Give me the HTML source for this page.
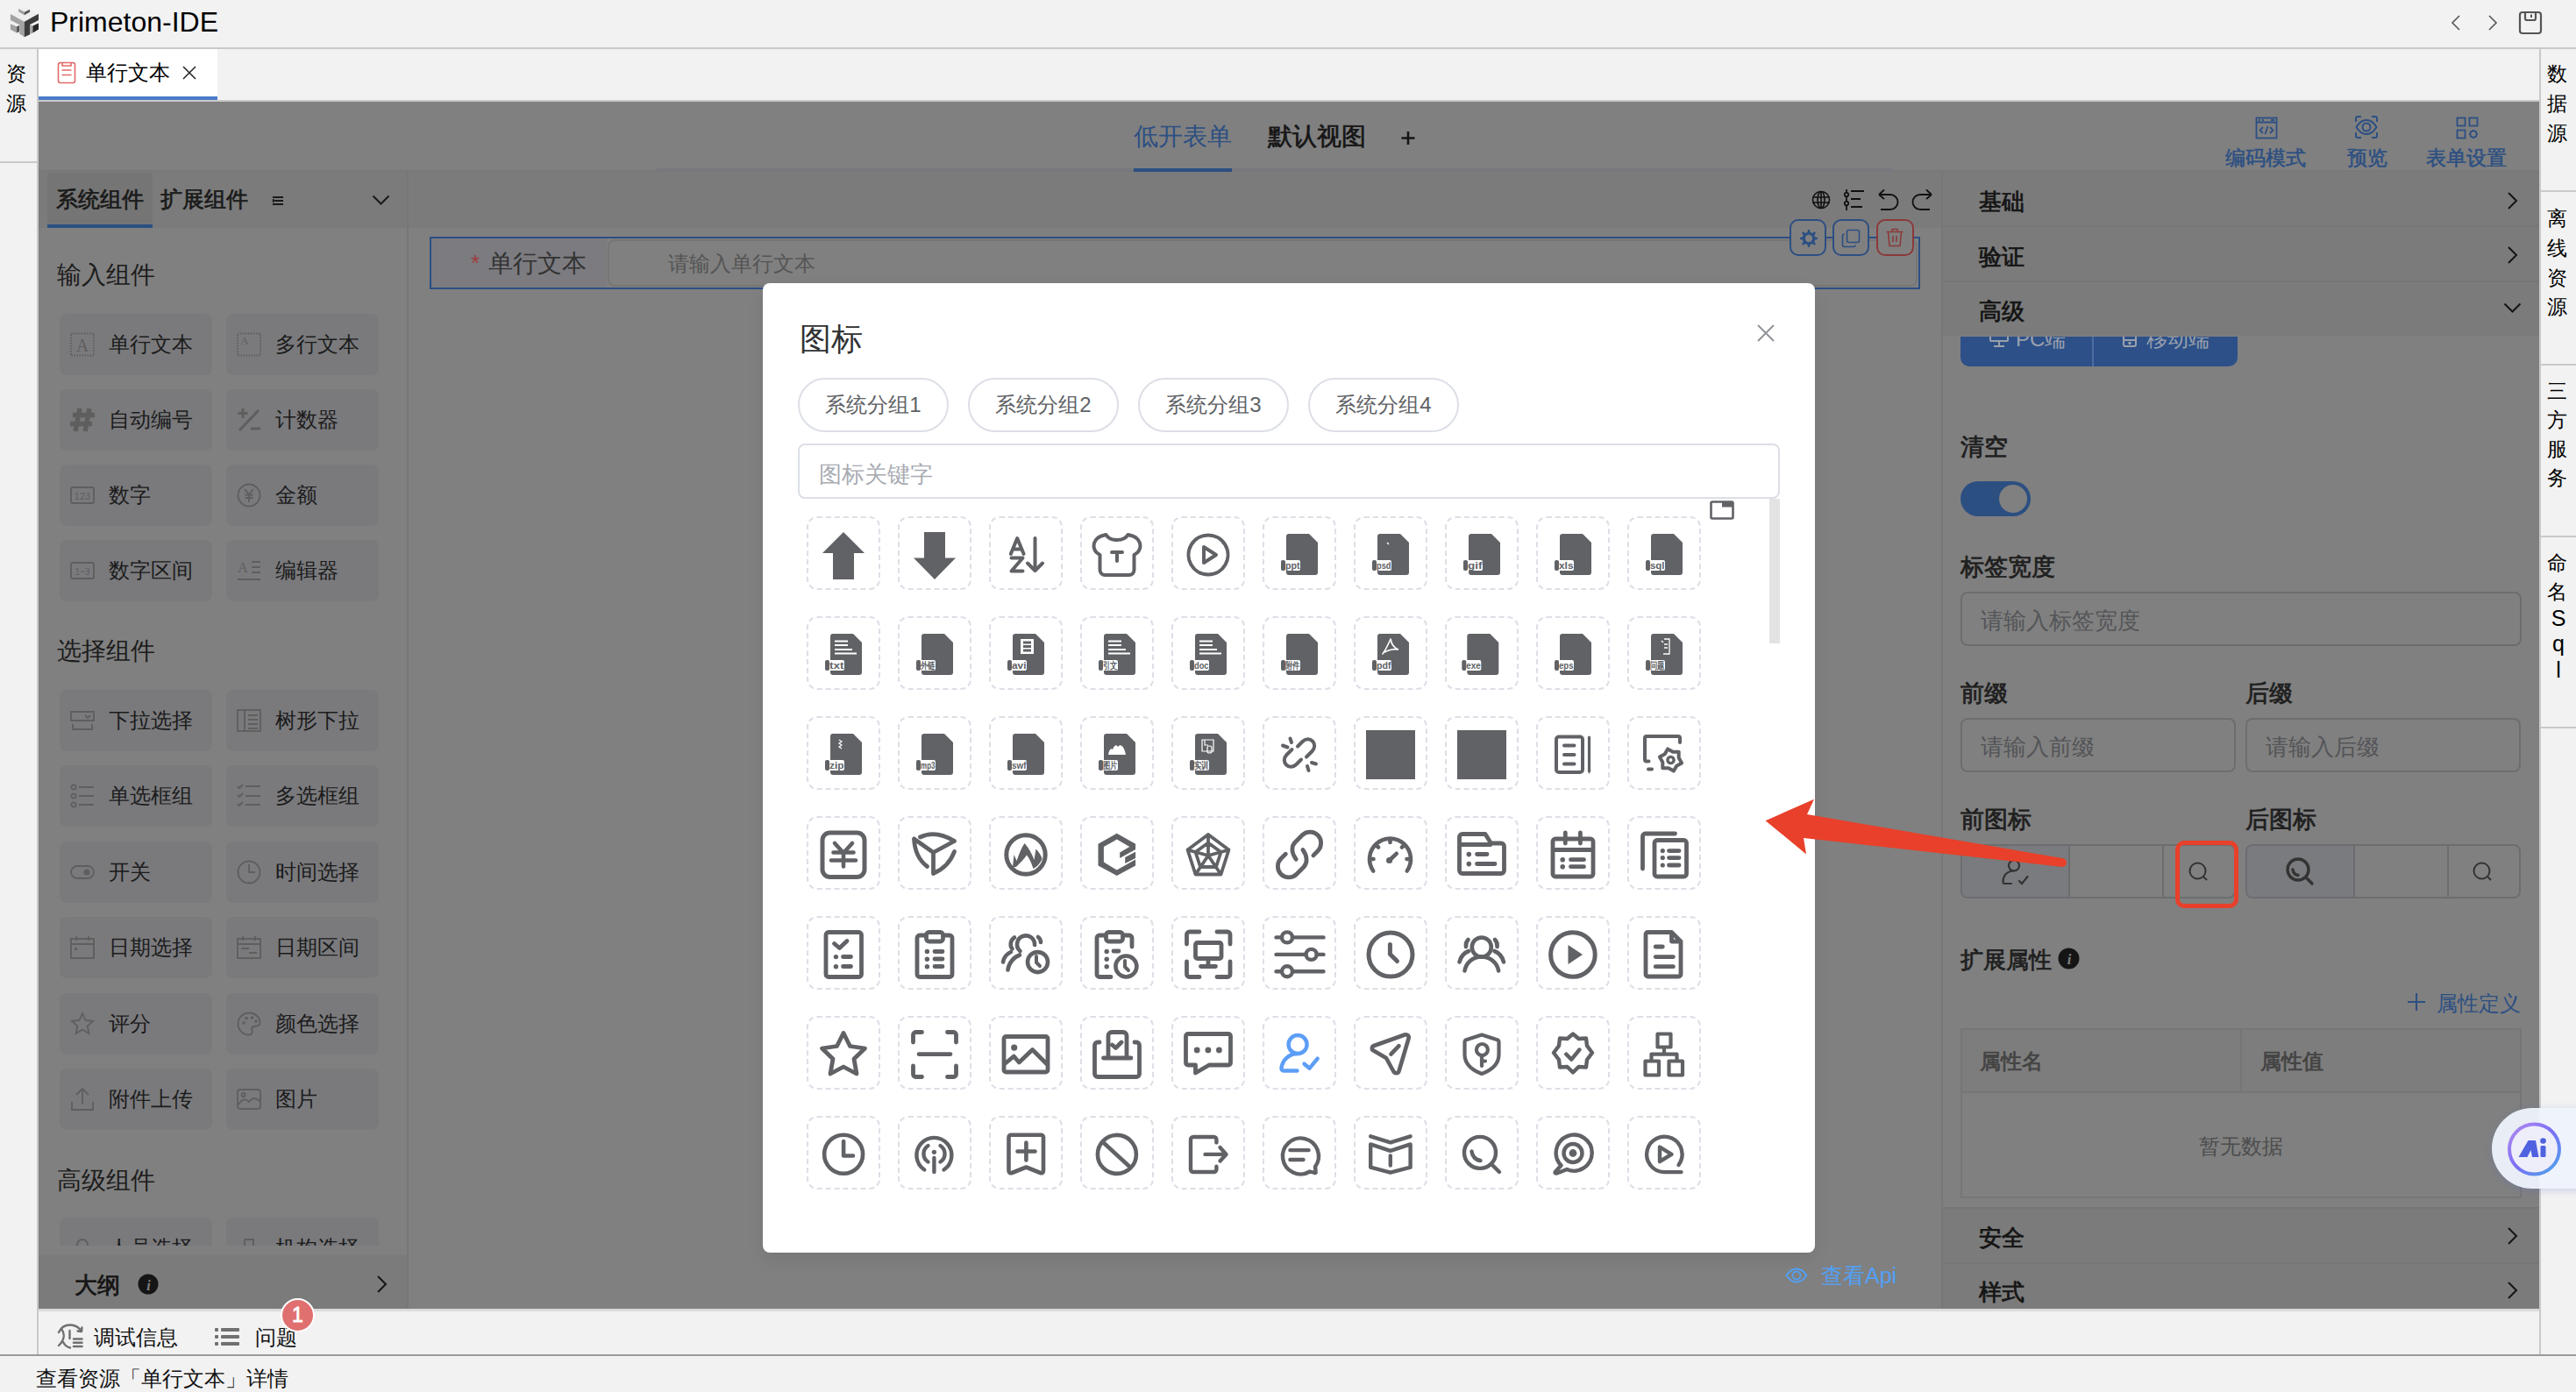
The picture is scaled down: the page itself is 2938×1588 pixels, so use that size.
<!DOCTYPE html>
<html><head><meta charset="utf-8">
<style>
*{box-sizing:border-box;margin:0;padding:0}
html,body{width:2938px;height:1588px;overflow:hidden;background:#f2f2f2;font-family:"Liberation Sans",sans-serif;color:#000}
.a{position:absolute}
.t{position:absolute;white-space:nowrap;line-height:1}
svg{display:block}
/* frame */
#title{left:0;top:0;width:2938px;height:54px;background:#f2f2f2}
.hl{position:absolute;background:#c9c9c9}
/* main (overlay-darkened colors) */
#main{left:44px;top:116px;width:2852px;height:1377px;background:#808080;overflow:hidden}
.card{position:absolute;width:174px;height:70px;background:#7a7a7d;border-radius:8px}
.card .ic{position:absolute;left:12px;top:21px;width:28px;height:28px}
.card .tx{position:absolute;left:56px;top:23px;font-size:24px;line-height:24px;color:#1c1c1c;white-space:nowrap}
.sec{position:absolute;left:21px;font-size:28px;line-height:28px;color:#1c1c1c;white-space:nowrap}
.plab{position:absolute;font-size:27px;line-height:27px;color:#1f1f1f;-webkit-text-stroke-width:0.8px;white-space:nowrap}
.pin{position:absolute;height:62px;border:2px solid #6c6d70;border-radius:8px}
.pin span{position:absolute;left:21px;top:18px;font-size:26px;line-height:26px;color:#545558;white-space:nowrap}
/* modal */
#modal{left:870px;top:323px;width:1200px;height:1106px;background:#fff;border-radius:8px;box-shadow:0 8px 20px rgba(0,0,0,.08)}
.pill{position:absolute;top:108px;width:172px;height:62px;border:2px solid #dcdfe6;border-radius:31px;font-size:24px;line-height:58px;text-align:center;color:#606266}
.cell{position:absolute;width:84px;height:84px;border:2px dashed #dcdfe6;border-radius:12px}
.cell svg{position:absolute;left:-2px;top:-2px;width:84px;height:84px}
</style></head><body>

<!-- ===== Title bar ===== -->
<div id="title" class="a">
  <svg class="a" style="left:0;top:0" width="56" height="50" viewBox="0 0 56 50">
    <polygon points="11.9,16.1 27.8,7.5 44,15.8 27.8,24.8" fill="#eeeeee"/>
    <polygon points="21.2,10.1 27.8,13.7 27.8,17.2 21.2,13.2" fill="#9c9c9c"/>
    <polygon points="27.8,13.7 34,10.8 34,13.8 27.8,17.2" fill="#555"/>
    <polygon points="11.9,16.1 27.8,24.8 27.8,42.3 22.2,38.6 22.2,28.2 11.9,23" fill="#a2a2a2"/>
    <polygon points="27.8,24.8 44,15.8 44,23 34.3,27.9 34.3,39.2 27.8,42.3" fill="#3c3c3c"/>
    <polygon points="11.9,27.2 19.1,30.3 19.1,37.5 11.9,33.7" fill="#a0a0a0"/>
    <polygon points="19.1,30.3 22,28.9 22,36 19.1,37.5" fill="#555"/>
    <polygon points="34.3,28.2 37.4,29.6 37.4,37.5 34.3,39" fill="#a8a8a8"/>
    <polygon points="37.4,29.6 44,26.5 44,33.4 37.4,37.5" fill="#262626"/>
  </svg>
  <div class="t" style="left:57px;top:9px;font-size:32px;line-height:32px;color:#000">Primeton-IDE</div>
  <svg class="a" style="left:2794px;top:16px" width="14" height="20" viewBox="0 0 14 20"><path d="M11 2 L3 10 L11 18" fill="none" stroke="#555" stroke-width="1.6"/></svg>
  <svg class="a" style="left:2836px;top:16px" width="14" height="20" viewBox="0 0 14 20"><path d="M3 2 L11 10 L3 18" fill="none" stroke="#555" stroke-width="1.6"/></svg>
  <svg class="a" style="left:2872px;top:12px" width="28" height="28" viewBox="0 0 28 28"><rect x="2" y="2" width="24" height="24" rx="3" fill="none" stroke="#555" stroke-width="2.2"/><path d="M8 2 V9 a2 2 0 0 0 2 2 H18 a2 2 0 0 0 2 -2 V2" fill="none" stroke="#555" stroke-width="2.2"/><path d="M15 4.5 V8" stroke="#555" stroke-width="2"/></svg>
</div>
<div class="hl" style="left:0;top:54px;width:2938px;height:2px"></div>

<!-- ===== Left strip ===== -->
<div class="t" style="left:7px;top:73px;font-size:23px;color:#000">资</div>
<div class="t" style="left:7px;top:107px;font-size:23px;color:#000">源</div>
<div class="t" style="left:2905px;top:73px;font-size:23px;color:#000">数</div>
<div class="t" style="left:2905px;top:107px;font-size:23px;color:#000">据</div>
<div class="t" style="left:2905px;top:141px;font-size:23px;color:#000">源</div>
<div class="t" style="left:2905px;top:238px;font-size:23px;color:#000">离</div>
<div class="t" style="left:2905px;top:272px;font-size:23px;color:#000">线</div>
<div class="t" style="left:2905px;top:306px;font-size:23px;color:#000">资</div>
<div class="t" style="left:2905px;top:339px;font-size:23px;color:#000">源</div>
<div class="t" style="left:2905px;top:435px;font-size:23px;color:#000">三</div>
<div class="t" style="left:2905px;top:468px;font-size:23px;color:#000">方</div>
<div class="t" style="left:2905px;top:501px;font-size:23px;color:#000">服</div>
<div class="t" style="left:2905px;top:534px;font-size:23px;color:#000">务</div>
<div class="t" style="left:2905px;top:631px;font-size:23px;color:#000">命</div>
<div class="t" style="left:2905px;top:664px;font-size:23px;color:#000">名</div>
<div class="t" style="left:2907px;top:693px;font-size:25px;color:#000;width:22px;text-align:center">S</div>
<div class="t" style="left:2907px;top:722px;font-size:25px;color:#000;width:22px;text-align:center">q</div>
<div class="t" style="left:2907px;top:752px;font-size:25px;color:#000;width:22px;text-align:center">l</div>
<div class="hl" style="left:0;top:184px;width:42px;height:2px"></div>
<div class="hl" style="left:42px;top:56px;width:2px;height:1490px"></div>

<!-- ===== Right strip ===== -->
<div class="hl" style="left:2896px;top:56px;width:2px;height:1490px"></div>
<div class="hl" style="left:2898px;top:217px;width:40px;height:2px"></div>
<div class="hl" style="left:2898px;top:415px;width:40px;height:2px"></div>
<div class="hl" style="left:2898px;top:611px;width:40px;height:2px"></div>
<div class="hl" style="left:2898px;top:829px;width:40px;height:2px"></div>

<!-- ===== Tab bar ===== -->
<div class="a" style="left:44px;top:56px;width:204px;height:54px;background:#fff"></div>
<div class="a" style="left:44px;top:110px;width:204px;height:4px;background:#4a7bc8"></div>
<div class="hl" style="left:44px;top:114px;width:2852px;height:2px"></div>
<svg class="a" style="left:65px;top:70px" width="22" height="26" viewBox="0 0 22 26"><rect x="1.5" y="1.5" width="19" height="23" rx="2.5" fill="none" stroke="#e46a6a" stroke-width="1.6"/><path d="M6 1.5 V5 H16 V1.5 M5.5 10 H16.5 M5.5 15.5 H16.5" fill="none" stroke="#e46a6a" stroke-width="1.6"/></svg>
<div class="t" style="left:98px;top:71px;font-size:24px;line-height:24px">单行文本</div>
<svg class="a" style="left:207px;top:74px" width="18" height="18" viewBox="0 0 18 18"><path d="M2 2 L16 16 M16 2 L2 16" stroke="#222" stroke-width="1.5"/></svg>

<!-- ===== Main (darkened) ===== -->
<div id="main" class="a"></div>
<div class="a" style="left:44px;top:194px;width:2852px;height:2px;background:#797979"></div>
<div class="a" style="left:44px;top:196px;width:2170px;height:64px;background:#7b7b7b"></div>
<div class="t" style="left:1293px;top:142px;font-size:28px;color:#2c4f82">低开表单</div>
<div class="t" style="left:1446px;top:142px;font-size:28px;color:#161616;-webkit-text-stroke-width:0.7px">默认视图</div>
<svg class="a" style="left:1598px;top:149px" width="16" height="17" viewBox="0 0 16 17"><path d="M8 1 V16 M0.5 8.5 H15.5" stroke="#161616" stroke-width="2.6"/></svg>
<div class="a" style="left:749px;top:192px;width:1409px;height:4px;background:#76787d"></div>
<div class="a" style="left:1293px;top:192px;width:112px;height:4px;background:#2c4f82"></div>
<svg class="a" style="left:2572px;top:133px" width="26" height="26" viewBox="0 0 26 26" fill="none" stroke="#2c4f82" stroke-width="1.8"><rect x="1.5" y="1.5" width="23" height="23"/><path d="M1.5 6.5 H24.5 M4 4 H6 M8 4 H10 M18 4 H22"/><path d="M9 12 L5.5 15.5 L9 19 M17 12 L20.5 15.5 L17 19 M14.5 11 L11.5 20"/></svg>
<div class="t" style="left:2538px;top:169px;font-size:23px;color:#2c4f82;-webkit-text-stroke-width:0.5px">编码模式</div>
<svg class="a" style="left:2685px;top:131px" width="28" height="28" viewBox="0 0 28 28" fill="none" stroke="#2c4f82" stroke-width="2"><path d="M2 8 V4 a2 2 0 0 1 2 -2 H8 M20 2 H24 a2 2 0 0 1 2 2 V8 M26 20 V24 a2 2 0 0 1 -2 2 H20 M8 26 H4 a2 2 0 0 1 -2 -2 V20"/><path d="M2.5 14 C6 8 10 6 14 6 C18 6 22 8 25.5 14 C22 20 18 22 14 22 C10 22 6 20 2.5 14 Z"/><circle cx="14" cy="14" r="4.5"/></svg>
<div class="t" style="left:2677px;top:169px;font-size:23px;color:#2c4f82;-webkit-text-stroke-width:0.5px">预览</div>
<svg class="a" style="left:2801px;top:133px" width="26" height="26" viewBox="0 0 26 26" fill="none" stroke="#2c4f82" stroke-width="1.8"><rect x="1.5" y="1.5" width="9" height="9"/><rect x="15.5" y="1.5" width="9" height="9"/><rect x="1.5" y="15.5" width="9" height="9"/><circle cx="20" cy="20" r="3.6"/><path d="M20 15 V16.4 M20 23.6 V25 M15 20 H16.4 M23.6 20 H25 M16.5 16.5 L17.4 17.4 M22.6 22.6 L23.5 23.5 M23.5 16.5 L22.6 17.4 M17.4 22.6 L16.5 23.5"/></svg>
<div class="t" style="left:2767px;top:169px;font-size:23px;color:#2c4f82;-webkit-text-stroke-width:0.5px">表单设置</div>
<div class="a" style="left:464px;top:196px;width:2px;height:1297px;background:#777"></div>
<div class="a" style="left:54px;top:197px;width:120px;height:63px;background:#757575"></div>
<div class="a" style="left:54px;top:256px;width:120px;height:4px;background:#2c4f82"></div>
<div class="t" style="left:64px;top:215px;font-size:25px;color:#1a1a1a;-webkit-text-stroke-width:0.7px">系统组件</div>
<div class="t" style="left:183px;top:215px;font-size:25px;color:#1a1a1a;-webkit-text-stroke-width:0.7px">扩展组件</div>
<svg class="a" style="left:310px;top:223px" width="14" height="12" viewBox="0 0 14 12" fill="none" stroke="#1a1a1a" stroke-width="1.8"><path d="M1 2 H13 M4 6 H13 M1 10 H13 M1 4.5 L3 6 L1 7.5"/></svg>
<svg class="a" style="left:424px;top:222px" width="21" height="12" viewBox="0 0 21 12"><path d="M1.5 1.5 L10.5 10.5 L19.5 1.5" fill="none" stroke="#1a1a1a" stroke-width="2"/></svg>
<div class="a" style="left:44px;top:260px;width:420px;height:1161px;overflow:hidden">
<div class="sec" style="top:40px">输入组件</div>
<div class="card" style="left:24px;top:98px"><svg class="ic" viewBox="0 0 28 28"><rect x="1" y="1.5" width="26" height="25" fill="none" stroke="#5e5e5e" stroke-width="1.8" stroke-dasharray="1.5 1.5" stroke-width="1"/><text x="14" y="22" font-size="20" font-family="Liberation Serif,serif" text-anchor="middle" fill="#5e5e5e">A</text></svg><div class="tx">单行文本</div></div>
<div class="card" style="left:214px;top:98px"><svg class="ic" viewBox="0 0 28 28"><rect x="1" y="1.5" width="26" height="25" fill="none" stroke="#5e5e5e" stroke-width="1.8" stroke-dasharray="1.5 1.5" stroke-width="1"/><text x="9" y="14" font-size="13" font-family="Liberation Serif,serif" text-anchor="middle" fill="#5e5e5e">A</text></svg><div class="tx">多行文本</div></div>
<div class="card" style="left:24px;top:184px"><svg class="ic" viewBox="0 0 28 28"><path d="M11 1 L6 27 M22 1 L17 27 M3 8.5 H28 M0 18.5 H25" fill="none" stroke="#5e5e5e" stroke-width="5.5"/></svg><div class="tx">自动编号</div></div>
<div class="card" style="left:214px;top:184px"><svg class="ic" viewBox="0 0 28 28"><path d="M7 1 V12 M1.5 6.5 H12.5 M25 3 L3 26 M16 24 H27" fill="none" stroke="#5e5e5e" stroke-width="3"/></svg><div class="tx">计数器</div></div>
<div class="card" style="left:24px;top:270px"><svg class="ic" viewBox="0 0 28 28"><rect x="1" y="5" width="26" height="18" rx="1.5" fill="none" stroke="#5e5e5e" stroke-width="1.8"/><text x="14" y="19" font-size="11" text-anchor="middle" fill="#5e5e5e" font-family="Liberation Sans,sans-serif">123</text></svg><div class="tx">数字</div></div>
<div class="card" style="left:214px;top:270px"><svg class="ic" viewBox="0 0 28 28"><circle cx="14" cy="14" r="12.5" fill="none" stroke="#5e5e5e" stroke-width="1.8"/><path d="M9 7 L14 13 L19 7 M9.5 13.5 H18.5 M9.5 17 H18.5 M14 13 V22" fill="none" stroke="#5e5e5e" stroke-width="1.8"/></svg><div class="tx">金额</div></div>
<div class="card" style="left:24px;top:356px"><svg class="ic" viewBox="0 0 28 28"><rect x="1" y="5" width="26" height="18" rx="1.5" fill="none" stroke="#5e5e5e" stroke-width="1.8"/><text x="14" y="19" font-size="10" text-anchor="middle" fill="#5e5e5e" font-family="Liberation Sans,sans-serif">1~3</text></svg><div class="tx">数字区间</div></div>
<div class="card" style="left:214px;top:356px"><svg class="ic" viewBox="0 0 28 28"><text x="7" y="16" font-size="16" text-anchor="middle" fill="#5e5e5e" font-family="Liberation Serif,serif">A</text><path d="M17 4 H27 M17 10 H27 M17 16 H27 M1 24 H27" fill="none" stroke="#5e5e5e" stroke-width="1.8" stroke-width="2.4"/></svg><div class="tx">编辑器</div></div>
<div class="sec" style="top:469px">选择组件</div>
<div class="card" style="left:24px;top:527px"><svg class="ic" viewBox="0 0 28 28"><path d="M1 4 H27 V14 H1 Z M3 18 V24 H25 V18" fill="none" stroke="#5e5e5e" stroke-width="1.8"/><path d="M17 8 L20 11 L23 8" fill="none" stroke="#5e5e5e" stroke-width="1.8"/></svg><div class="tx">下拉选择</div></div>
<div class="card" style="left:214px;top:527px"><svg class="ic" viewBox="0 0 28 28"><rect x="1" y="2" width="26" height="24" fill="none" stroke="#5e5e5e" stroke-width="1.8"/><path d="M9 2 V26 M13 8 H24 M13 13 H24 M13 18 H24 M13 23 H24" fill="none" stroke="#5e5e5e" stroke-width="1.8"/></svg><div class="tx">树形下拉</div></div>
<div class="card" style="left:24px;top:613px"><svg class="ic" viewBox="0 0 28 28"><circle cx="4" cy="4" r="2.6" fill="none" stroke="#5e5e5e" stroke-width="1.8" stroke-width="1.2"/><circle cx="4" cy="14" r="2.6" fill="none" stroke="#5e5e5e" stroke-width="1.8" stroke-width="1.2"/><circle cx="4" cy="24" r="2.6" fill="none" stroke="#5e5e5e" stroke-width="1.8" stroke-width="1.2"/><path d="M10 4 H27 M10 14 H27 M10 24 H27" fill="none" stroke="#5e5e5e" stroke-width="1.8" stroke-width="2.2"/></svg><div class="tx">单选框组</div></div>
<div class="card" style="left:214px;top:613px"><svg class="ic" viewBox="0 0 28 28"><path d="M1 3 L3 5 L7 1 M1 13 L3 15 L7 11 M1 23 L3 25 L7 21" fill="none" stroke="#5e5e5e" stroke-width="1.8" stroke-width="1.2"/><path d="M10 3 H27 M10 14 H27 M10 24 H27" fill="none" stroke="#5e5e5e" stroke-width="1.8" stroke-width="2.2"/></svg><div class="tx">多选框组</div></div>
<div class="card" style="left:24px;top:700px"><svg class="ic" viewBox="0 0 28 28"><rect x="1" y="7" width="26" height="14" rx="7" fill="none" stroke="#5e5e5e" stroke-width="1.8"/><circle cx="19" cy="14" r="3.6" fill="#5e5e5e"/></svg><div class="tx">开关</div></div>
<div class="card" style="left:214px;top:700px"><svg class="ic" viewBox="0 0 28 28"><circle cx="14" cy="14" r="12.5" fill="none" stroke="#5e5e5e" stroke-width="1.8"/><path d="M14 5 V14 H21 M14 25 V27" fill="none" stroke="#5e5e5e" stroke-width="1.8"/></svg><div class="tx">时间选择</div></div>
<div class="card" style="left:24px;top:786px"><svg class="ic" viewBox="0 0 28 28"><rect x="1" y="4" width="26" height="22" fill="none" stroke="#5e5e5e" stroke-width="1.8"/><path d="M1 10 H27 M7 1 V6 M21 1 V6" fill="none" stroke="#5e5e5e" stroke-width="1.8"/><rect x="5" y="14" width="3" height="3" fill="#5e5e5e"/></svg><div class="tx">日期选择</div></div>
<div class="card" style="left:214px;top:786px"><svg class="ic" viewBox="0 0 28 28"><rect x="1" y="4" width="26" height="22" fill="none" stroke="#5e5e5e" stroke-width="1.8"/><path d="M1 10 H27 M7 1 V6 M21 1 V6 M5 15 H14 M14 20 H23" fill="none" stroke="#5e5e5e" stroke-width="1.8"/></svg><div class="tx">日期区间</div></div>
<div class="card" style="left:24px;top:873px"><svg class="ic" viewBox="0 0 28 28"><path d="M14 2 L17.5 10 L26 10.8 L19.6 16.5 L21.5 25 L14 20.5 L6.5 25 L8.4 16.5 L2 10.8 L10.5 10 Z" fill="none" stroke="#5e5e5e" stroke-width="1.8"/></svg><div class="tx">评分</div></div>
<div class="card" style="left:214px;top:873px"><svg class="ic" viewBox="0 0 28 28"><path d="M14 1.5 C21 1.5 26.5 6.5 26.5 12.5 C26.5 17 22 17 19.5 17 C17 17 16.5 19 17.5 21 C19 24 16.5 26.5 14 26.5 C7 26.5 1.5 21 1.5 14 C1.5 7 7 1.5 14 1.5 Z" fill="none" stroke="#5e5e5e" stroke-width="1.8"/><circle cx="8" cy="13" r="1.8" fill="#5e5e5e"/><circle cx="11" cy="7.5" r="1.8" fill="#5e5e5e"/><circle cx="17.5" cy="7" r="1.8" fill="#5e5e5e"/><circle cx="22" cy="11" r="1.8" fill="#5e5e5e"/></svg><div class="tx">颜色选择</div></div>
<div class="card" style="left:24px;top:959px"><svg class="ic" viewBox="0 0 28 28"><path d="M14 2 V20 M7 9 L14 2 L21 9 M2 17 V26 H26 V17" fill="none" stroke="#5e5e5e" stroke-width="1.8" stroke-width="2"/></svg><div class="tx">附件上传</div></div>
<div class="card" style="left:214px;top:959px"><svg class="ic" viewBox="0 0 28 28"><rect x="1" y="3" width="26" height="22" rx="3" fill="none" stroke="#5e5e5e" stroke-width="1.8"/><circle cx="7.5" cy="9" r="2" fill="none" stroke="#5e5e5e" stroke-width="1.8" stroke-width="1.4"/><path d="M2 20 C7 13 10 13 14 17 C18 12 22 12 26 16" fill="none" stroke="#5e5e5e" stroke-width="1.8"/></svg><div class="tx">图片</div></div>
<div class="sec" style="top:1073px">高级组件</div>
<div class="card" style="left:24px;top:1129px"><svg class="ic" viewBox="0 0 28 28"><circle cx="14" cy="10" r="6" fill="none" stroke="#5e5e5e" stroke-width="1.8"/><path d="M3 27 C3 20 8 17 14 17 C20 17 25 20 25 27" fill="none" stroke="#5e5e5e" stroke-width="1.8"/></svg><div class="tx">人员选择</div></div>
<div class="card" style="left:214px;top:1129px"><svg class="ic" viewBox="0 0 28 28"><rect x="9" y="4" width="10" height="9" fill="none" stroke="#5e5e5e" stroke-width="1.8"/><path d="M14 13 V19 M4 19 H24 V25 M4 19 V25" fill="none" stroke="#5e5e5e" stroke-width="1.8"/></svg><div class="tx">机构选择</div></div>
</div>
<div class="a" style="left:44px;top:1432px;width:420px;height:61px;background:#7b7b7b"></div>
<div class="t" style="left:85px;top:1453px;font-size:26px;color:#151515;-webkit-text-stroke-width:0.8px">大纲</div>
<svg class="a" style="left:157px;top:1453px" width="24" height="24" viewBox="0 0 24 24"><circle cx="12" cy="12" r="11.5" fill="#151515"/><text x="12.5" y="18.5" font-size="16" font-weight="bold" font-style="italic" text-anchor="middle" fill="#808080" font-family="Liberation Serif,serif">i</text></svg>
<svg class="a" style="left:429px;top:1454px" width="13" height="22" viewBox="0 0 13 22"><path d="M2 2 L11 11 L2 20" fill="none" stroke="#151515" stroke-width="2"/></svg>
<svg class="a" style="left:2066px;top:217px" width="22" height="22" viewBox="0 0 22 22" fill="none" stroke="#111" stroke-width="1.6"><circle cx="11" cy="11" r="9.5"/><ellipse cx="11" cy="11" rx="4" ry="9.5"/><path d="M1.5 8 H20.5 M1.5 14 H20.5 M11 1.5 V20.5"/></svg>
<svg class="a" style="left:2102px;top:215px" width="26" height="26" viewBox="0 0 26 26" fill="none" stroke="#111" stroke-width="1.8"><path d="M4 1 V25 M9 3 H24 M9 12 H20 M9 21 H22"/><circle cx="4" cy="7" r="2.2" fill="#808080"/><circle cx="4" cy="17" r="2.2" fill="#808080"/></svg>
<svg class="a" style="left:2141px;top:215px" width="26" height="26" viewBox="0 0 26 26" fill="none" stroke="#111" stroke-width="1.8"><path d="M2 7 L8 1.5 M2 7 L8 12 M2 7 H15 a8.5 8.5 0 0 1 0 17 H4"/></svg>
<svg class="a" style="left:2179px;top:215px" width="26" height="26" viewBox="0 0 26 26" fill="none" stroke="#111" stroke-width="1.8"><path d="M24 7 L18 1.5 M24 7 L18 12 M24 7 H11 a8.5 8.5 0 0 0 0 17 H22"/></svg>
<div class="a" style="left:490px;top:270px;width:1700px;height:60px;border:2px solid #2c4f82"></div>
<div class="a" style="left:492px;top:272px;width:200px;height:56px;background:#7b7b80"></div>
<div class="t" style="left:537px;top:287px;font-size:26px;color:#9e3d3d">*</div>
<div class="t" style="left:557px;top:287px;font-size:28px;color:#333">单行文本</div>
<div class="a" style="left:693px;top:273px;width:1494px;height:54px;border:2px solid #767676;border-radius:8px;background:#808080"></div>
<div class="t" style="left:762px;top:289px;font-size:24px;color:#555">请输入单行文本</div>
<div class="a" style="left:2041px;top:250px;width:42px;height:42px;border:2px solid #2c4f82;border-radius:10px;background:#808080"></div>
<svg class="a" style="left:2051px;top:261px" width="22" height="22" viewBox="0 0 22 22"><path d="M11 1 L13 1 L13.6 4 L16 5 L18.5 3.2 L20 4.8 L18.3 7.2 L19.2 9.5 L22 10 V12 L19.2 12.6 L18.3 14.9 L20 17.3 L18.5 18.8 L16 17.1 L13.6 18.1 L13 21 H11 L10.4 18.1 L8 17.1 L5.5 18.8 L4 17.3 L5.7 14.9 L4.8 12.6 L2 12 V10 L4.8 9.5 L5.7 7.2 L4 4.8 L5.5 3.2 L8 5 L10.4 4 Z" fill="#2c4f82"/><circle cx="12" cy="11" r="4.2" fill="#808080"/></svg>
<div class="a" style="left:2083px;top:270px;width:8px;height:2px;background:#2c4f82"></div>
<div class="a" style="left:2090px;top:250px;width:42px;height:42px;border:2px solid #2c4f82;border-radius:10px;background:#808080"></div>
<svg class="a" style="left:2100px;top:261px" width="22" height="22" viewBox="0 0 22 22" fill="none" stroke="#2c4f82" stroke-width="1.6"><rect x="6.5" y="1.5" width="14" height="14" rx="2"/><path d="M3.5 6 a2 2 0 0 0 -2 2 V18.5 a2 2 0 0 0 2 2 H14 a2 2 0 0 0 2 -2"/></svg>
<div class="a" style="left:2132px;top:270px;width:9px;height:2px;background:#2c4f82"></div>
<div class="a" style="left:2140px;top:250px;width:43px;height:42px;border:2px solid #8b3a3a;border-radius:10px;background:#808080"></div>
<svg class="a" style="left:2150px;top:260px" width="22" height="22" viewBox="0 0 22 22" fill="none" stroke="#8b3a3a" stroke-width="1.6"><path d="M1.5 4.5 H20.5 M8 4.5 V1.5 H14 V4.5 M3.5 4.5 L5 20.5 H17 L18.5 4.5 M9 9 V16 M13 9 V16"/></svg>
<div class="a" style="left:2214px;top:196px;width:2px;height:1297px;background:#777"></div>
<div class="a" style="left:2216px;top:196px;width:680px;height:187px;background:#7b7b7b"></div>
<div class="a" style="left:2216px;top:257px;width:680px;height:2px;background:#767676"></div>
<div class="a" style="left:2216px;top:320px;width:680px;height:2px;background:#767676"></div>
<div class="t" style="left:2257px;top:217px;font-size:26px;color:#151515;-webkit-text-stroke-width:0.8px">基础</div>
<div class="t" style="left:2257px;top:280px;font-size:26px;color:#151515;-webkit-text-stroke-width:0.8px">验证</div>
<div class="t" style="left:2257px;top:342px;font-size:26px;color:#151515;-webkit-text-stroke-width:0.8px">高级</div>
<svg class="a" style="left:2859px;top:218px" width="13" height="22" viewBox="0 0 13 22"><path d="M2 2 L11 11 L2 20" fill="none" stroke="#151515" stroke-width="2"/></svg>
<svg class="a" style="left:2859px;top:280px" width="13" height="22" viewBox="0 0 13 22"><path d="M2 2 L11 11 L2 20" fill="none" stroke="#151515" stroke-width="2"/></svg>
<svg class="a" style="left:2855px;top:345px" width="21" height="13" viewBox="0 0 21 13"><path d="M1.5 1.5 L10.5 10.5 L19.5 1.5" fill="none" stroke="#151515" stroke-width="2"/></svg>
<div class="a" style="left:2236px;top:384px;width:316px;height:34px;overflow:hidden"><div class="a" style="left:0;top:-28px;width:316px;height:62px;background:#2d5089;border-radius:0 0 10px 10px"></div><div class="a" style="left:150px;top:0;width:2px;height:35px;background:#4e6d9e"></div><svg class="a" style="left:32px;top:-9px" width="24" height="22" viewBox="0 0 24 22" fill="none" stroke="#9aa0ab" stroke-width="2"><rect x="2" y="1" width="20" height="13" rx="1"/><path d="M12 14 V19 M6 20 H18"/></svg><div class="t" style="left:63px;top:-9px;font-size:24px;color:#9aa0ab">PC端</div><svg class="a" style="left:184px;top:-9px" width="18" height="22" viewBox="0 0 18 22" fill="none" stroke="#9aa0ab" stroke-width="2"><rect x="2" y="1" width="14" height="19" rx="2"/><path d="M2 13 H16"/><circle cx="9" cy="16.5" r="0.8" fill="#9aa0ab"/></svg><div class="t" style="left:212px;top:-9px;font-size:24px;color:#9aa0ab">移动端</div></div>
<div class="plab" style="left:2236px;top:497px">清空</div>
<div class="a" style="left:2236px;top:549px;width:80px;height:40px;border-radius:20px;background:#2c4f82"></div>
<div class="a" style="left:2280px;top:553px;width:32px;height:32px;border-radius:16px;background:#808080"></div>
<div class="plab" style="left:2236px;top:634px">标签宽度</div>
<div class="pin" style="left:2236px;top:675px;width:640px"><span>请输入标签宽度</span></div>
<div class="plab" style="left:2236px;top:778px">前缀</div>
<div class="plab" style="left:2561px;top:778px">后缀</div>
<div class="pin" style="left:2236px;top:819px;width:314px"><span>请输入前缀</span></div>
<div class="pin" style="left:2561px;top:819px;width:314px"><span>请输入后缀</span></div>
<div class="plab" style="left:2236px;top:922px">前图标</div>
<div class="plab" style="left:2561px;top:922px">后图标</div>
<div class="pin" style="left:2236px;top:963px;width:314px;overflow:hidden"><div class="a" style="left:0;top:0;width:121px;height:58px;background:#7a7b7e"></div><div class="a" style="left:121px;top:0;width:2px;height:58px;background:#6c6d70"></div><div class="a" style="left:228px;top:0;width:2px;height:58px;background:#6c6d70"></div></div>
<div class="pin" style="left:2561px;top:963px;width:314px;overflow:hidden"><div class="a" style="left:0;top:0;width:121px;height:58px;background:#7a7b7e"></div><div class="a" style="left:121px;top:0;width:2px;height:58px;background:#6c6d70"></div><div class="a" style="left:228px;top:0;width:2px;height:58px;background:#6c6d70"></div></div>
<svg class="a" style="left:2281px;top:980px" width="34" height="30" viewBox="0 0 34 30" fill="none" stroke="#333" stroke-width="2.2" stroke-linecap="round"><circle cx="16" cy="7.5" r="6"/><path d="M16 13.5 C9 13.5 3.5 18 3.5 26 C3.5 27 4 28 5.5 28 H13 M22 25 L25 28 L31.5 20"/></svg>
<svg class="a" style="left:2496px;top:983px" width="24" height="24" viewBox="0 0 24 24" fill="none" stroke="#333" stroke-width="2"><circle cx="10.5" cy="10.5" r="9"/><path d="M17 17 L21 21"/></svg>
<svg class="a" style="left:2606px;top:977px" width="34" height="34" viewBox="0 0 34 34" fill="none" stroke="#333" stroke-width="3.4" stroke-linecap="round"><circle cx="15" cy="15" r="12"/><path d="M24 24 L31 31 M9 15 C9.5 19 11.5 21 15 21.5"/></svg>
<svg class="a" style="left:2820px;top:983px" width="24" height="24" viewBox="0 0 24 24" fill="none" stroke="#333" stroke-width="2"><circle cx="10.5" cy="10.5" r="9"/><path d="M17 17 L21 21"/></svg>
<div class="plab" style="left:2236px;top:1082px;font-size:26px">扩展属性</div>
<svg class="a" style="left:2347px;top:1081px" width="25" height="25" viewBox="0 0 24 24"><circle cx="12" cy="12" r="11.5" fill="#151515"/><text x="12.5" y="18.5" font-size="16" font-weight="bold" font-style="italic" text-anchor="middle" fill="#808080" font-family="Liberation Serif,serif">i</text></svg>
<svg class="a" style="left:2745px;top:1132px" width="22" height="22" viewBox="0 0 22 22"><path d="M11 1 V21 M1 11 H21" stroke="#2c4f82" stroke-width="2"/></svg>
<div class="t" style="left:2779px;top:1133px;font-size:24px;color:#2c4f82">属性定义</div>
<div class="a" style="left:2236px;top:1173px;width:640px;height:194px;border:2px solid #767676"></div>
<div class="a" style="left:2238px;top:1175px;width:636px;height:70px;background:#7d7d7d"></div>
<div class="a" style="left:2238px;top:1245px;width:636px;height:2px;background:#767676"></div>
<div class="a" style="left:2555px;top:1175px;width:2px;height:70px;background:#767676"></div>
<div class="t" style="left:2258px;top:1199px;font-size:24px;color:#444;-webkit-text-stroke-width:0.8px">属性名</div>
<div class="t" style="left:2578px;top:1199px;font-size:24px;color:#444;-webkit-text-stroke-width:0.8px">属性值</div>
<div class="t" style="left:2508px;top:1296px;font-size:24px;color:#4d4d4d">暂无数据</div>
<div class="a" style="left:2216px;top:1377px;width:680px;height:116px;background:#7b7b7b"></div>
<div class="a" style="left:2216px;top:1377px;width:680px;height:2px;background:#767676"></div>
<div class="a" style="left:2216px;top:1440px;width:680px;height:2px;background:#767676"></div>
<div class="t" style="left:2257px;top:1399px;font-size:26px;color:#151515;-webkit-text-stroke-width:0.8px">安全</div>
<div class="t" style="left:2257px;top:1461px;font-size:26px;color:#151515;-webkit-text-stroke-width:0.8px">样式</div>
<svg class="a" style="left:2859px;top:1399px" width="13" height="22" viewBox="0 0 13 22"><path d="M2 2 L11 11 L2 20" fill="none" stroke="#151515" stroke-width="2"/></svg>
<svg class="a" style="left:2859px;top:1461px" width="13" height="22" viewBox="0 0 13 22"><path d="M2 2 L11 11 L2 20" fill="none" stroke="#151515" stroke-width="2"/></svg>

<!-- ===== Bottom panel ===== -->
<div class="a" style="left:44px;top:1493px;width:2852px;height:3px;background:#dadada"></div>
<svg class="a" style="left:60px;top:1505px" width="40" height="38" viewBox="60 1505 40 38" fill="none" stroke="#707070" stroke-width="2.4" stroke-linecap="round"><path d="M67 1520 C70 1513 75 1511.5 80 1511.5 C85 1511.5 90 1514 93 1519 M93 1519 L93.5 1514.5 M93 1519 L88.5 1518.5 M70 1516 C74 1521 74 1528 67 1535 M72 1531 C74 1535 77 1537 80 1537.5 M79.5 1518 V1527"/><path d="M84 1527.5 H93.5 M84 1531.8 H93.5 M84 1536 H93.5" stroke-width="2.6"/></svg>
<div class="t" style="left:107px;top:1514px;font-size:24px;color:#111">调试信息</div>
<svg class="a" style="left:245px;top:1514px" width="28" height="22" viewBox="0 0 28 22" fill="#707070"><rect x="0" y="1" width="4" height="4" rx="1"/><rect x="0" y="9" width="4" height="4" rx="1"/><rect x="0" y="17" width="4" height="4" rx="1"/><rect x="7" y="1" width="21" height="4" rx="1"/><rect x="7" y="9" width="21" height="4" rx="1"/><rect x="7" y="17" width="21" height="4" rx="1"/></svg>
<div class="t" style="left:291px;top:1514px;font-size:24px;color:#111">问题</div>
<div class="a" style="left:320px;top:1481px;width:39px;height:39px;border-radius:20px;background:#e07070;border:2px solid #fff"></div>
<div class="t" style="left:333px;top:1489px;font-size:23px;color:#fff;-webkit-text-stroke-width:0.8px">1</div>

<!-- ===== Status bar ===== -->
<div class="a" style="left:0;top:1545px;width:2938px;height:2px;background:#9a9a9a"></div>
<div class="t" style="left:41px;top:1561px;font-size:24px;line-height:24px;color:#111">查看资源「单行文本」详情</div>

<!-- ===== Modal ===== -->
<div id="modal" class="a">
<div class="t" style="left:42px;top:46px;font-size:36px;color:#303133">图标</div>
<svg class="a" style="left:1133px;top:46px" width="22" height="22" viewBox="0 0 22 22"><path d="M2 2 L20 20 M20 2 L2 20" stroke="#909399" stroke-width="2"/></svg>
<div class="pill" style="left:40px">系统分组1</div>
<div class="pill" style="left:234px">系统分组2</div>
<div class="pill" style="left:428px">系统分组3</div>
<div class="pill" style="left:622px">系统分组4</div>
<div class="a" style="left:40px;top:183px;width:1120px;height:63px;border:2px solid #dcdfe6;border-radius:8px"></div>
<div class="t" style="left:64px;top:205px;font-size:26px;color:#a8abb2">图标关键字</div>
<div class="a" style="left:1148px;top:246px;width:12px;height:165px;background:#e3e3e3"></div>
<svg class="a" style="left:1080px;top:248px" width="28" height="22" viewBox="0 0 28 22"><rect x="1.5" y="1.5" width="25" height="19" rx="1.5" fill="none" stroke="#606266" stroke-width="2.6"/><rect x="14" y="1.5" width="12.5" height="6" fill="#606266"/></svg>
<div class="cell" style="left:50px;top:266px"><svg viewBox="0 0 84 84"><path d="M42 18 L66 42 H54 V72 H30 V42 H18 Z" fill="#606266"/></svg></div>
<div class="cell" style="left:154px;top:266px"><svg viewBox="0 0 84 84"><path d="M30 18 H54 V47.5 H66 L42 72 L18 47.5 H30 Z" fill="#606266"/></svg></div>
<div class="cell" style="left:258px;top:266px"><svg viewBox="0 0 84 84"><path d="M24.8 43 L32.2 25 L39.6 43 M27.5 37.5 H37 M25.5 47.5 H38.5 L25.5 62.5 H38.5 M52.5 25 V62 M44 53.5 L52.5 62 L61 53.5" fill="none" stroke="#606266" stroke-width="4" stroke-linecap="round" stroke-linejoin="round"/></svg></div>
<div class="cell" style="left:362px;top:266px"><svg viewBox="0 0 84 84"><path d="M29.5 21 C31.5 24.5 36 27 42 27 C48 27 52.5 24.5 54.5 21 L60 22.5 C65 24 68.5 29 68.5 34 C68.5 38 66 41.5 61.5 44 V61 C61.5 64.5 59 67 55.5 67 H28.5 C25 67 22.5 64.5 22.5 61 V44 C18 41.5 15.5 38 15.5 34 C15.5 29 19 24 24 22.5 Z M36 41 H48 M42 41 V51" fill="none" stroke="#606266" stroke-width="4" stroke-linecap="round" stroke-linejoin="round"/></svg></div>
<div class="cell" style="left:466px;top:266px"><svg viewBox="0 0 84 84"><path d="M42 21.5 a22.5 22.5 0 1 0 0.01 0 Z M37 35 L51 44 L37 53 Z" fill="none" stroke="#606266" stroke-width="4" stroke-linecap="round" stroke-linejoin="round"/></svg></div>
<div class="cell" style="left:570px;top:266px"><svg viewBox="0 0 84 84"><g transform="translate(0,0)"><path d="M30 20 H53 L63 30 V64 a3 3 0 0 1 -3 3 H30 a3 3 0 0 1 -3 -3 V23 a3 3 0 0 1 3 -3 Z" fill="#606266"/><rect x="21" y="50" width="22" height="12" rx="2" fill="#fff"/><rect x="21" y="50" width="5" height="12" rx="2" fill="#606266"/><text x="26" y="60" font-size="11" font-weight="bold" fill="#606266" font-family="Liberation Sans, sans-serif" textLength="16.5" lengthAdjust="spacingAndGlyphs">ppt</text></g></svg></div>
<div class="cell" style="left:674px;top:266px"><svg viewBox="0 0 84 84"><g transform="translate(0,0)"><path d="M30 20 H53 L63 30 V64 a3 3 0 0 1 -3 3 H30 a3 3 0 0 1 -3 -3 V23 a3 3 0 0 1 3 -3 Z" fill="#606266"/><path d="M38 30 L40 32" stroke="#fff" stroke-width="1.2"/><rect x="21" y="50" width="22" height="12" rx="2" fill="#fff"/><rect x="21" y="50" width="5" height="12" rx="2" fill="#606266"/><text x="26" y="60" font-size="11" font-weight="bold" fill="#606266" font-family="Liberation Sans, sans-serif" textLength="16.5" lengthAdjust="spacingAndGlyphs">psd</text></g></svg></div>
<div class="cell" style="left:778px;top:266px"><svg viewBox="0 0 84 84"><g transform="translate(0,0)"><path d="M30 20 H53 L63 30 V64 a3 3 0 0 1 -3 3 H30 a3 3 0 0 1 -3 -3 V23 a3 3 0 0 1 3 -3 Z" fill="#606266"/><rect x="21" y="50" width="22" height="12" rx="2" fill="#fff"/><rect x="21" y="50" width="5" height="12" rx="2" fill="#606266"/><text x="26" y="60" font-size="11" font-weight="bold" fill="#606266" font-family="Liberation Sans, sans-serif" textLength="16.5" lengthAdjust="spacingAndGlyphs">gif</text></g></svg></div>
<div class="cell" style="left:882px;top:266px"><svg viewBox="0 0 84 84"><g transform="translate(0,0)"><path d="M30 20 H53 L63 30 V64 a3 3 0 0 1 -3 3 H30 a3 3 0 0 1 -3 -3 V23 a3 3 0 0 1 3 -3 Z" fill="#606266"/><rect x="21" y="50" width="22" height="12" rx="2" fill="#fff"/><rect x="21" y="50" width="5" height="12" rx="2" fill="#606266"/><text x="26" y="60" font-size="11" font-weight="bold" fill="#606266" font-family="Liberation Sans, sans-serif" textLength="16.5" lengthAdjust="spacingAndGlyphs">xls</text></g></svg></div>
<div class="cell" style="left:986px;top:266px"><svg viewBox="0 0 84 84"><g transform="translate(0,0)"><path d="M30 20 H53 L63 30 V64 a3 3 0 0 1 -3 3 H30 a3 3 0 0 1 -3 -3 V23 a3 3 0 0 1 3 -3 Z" fill="#606266"/><rect x="21" y="50" width="22" height="12" rx="2" fill="#fff"/><rect x="21" y="50" width="5" height="12" rx="2" fill="#606266"/><text x="26" y="60" font-size="11" font-weight="bold" fill="#606266" font-family="Liberation Sans, sans-serif" textLength="16.5" lengthAdjust="spacingAndGlyphs">sql</text></g></svg></div>
<div class="cell" style="left:50px;top:380px"><svg viewBox="0 0 84 84"><g transform="translate(0,0)"><path d="M30 20 H53 L63 30 V64 a3 3 0 0 1 -3 3 H30 a3 3 0 0 1 -3 -3 V23 a3 3 0 0 1 3 -3 Z" fill="#606266"/><g fill="#fff"><rect x="32" y="27.5" width="15" height="2"/><rect x="32" y="32" width="15" height="2"/><rect x="32" y="37" width="20" height="2"/><rect x="32" y="41.5" width="25" height="2"/></g><rect x="21" y="50" width="22" height="12" rx="2" fill="#fff"/><rect x="21" y="50" width="5" height="12" rx="2" fill="#606266"/><text x="26" y="60" font-size="11" font-weight="bold" fill="#606266" font-family="Liberation Sans, sans-serif" textLength="16.5" lengthAdjust="spacingAndGlyphs">txt</text></g></svg></div>
<div class="cell" style="left:154px;top:380px"><svg viewBox="0 0 84 84"><g transform="translate(0,0)"><path d="M30 20 H53 L63 30 V64 a3 3 0 0 1 -3 3 H30 a3 3 0 0 1 -3 -3 V23 a3 3 0 0 1 3 -3 Z" fill="#606266"/><rect x="21" y="50" width="22" height="12" rx="2" fill="#fff"/><rect x="21" y="50" width="5" height="12" rx="2" fill="#606266"/><text x="26" y="60" font-size="11" font-weight="bold" fill="#606266" font-family="Liberation Sans, sans-serif" textLength="16.5" lengthAdjust="spacingAndGlyphs">外链</text></g></svg></div>
<div class="cell" style="left:258px;top:380px"><svg viewBox="0 0 84 84"><g transform="translate(0,0)"><path d="M30 20 H53 L63 30 V64 a3 3 0 0 1 -3 3 H30 a3 3 0 0 1 -3 -3 V23 a3 3 0 0 1 3 -3 Z" fill="#606266"/><g fill="#fff"><rect x="36" y="26" width="15" height="17"/></g><g fill="#606266"><rect x="39" y="28.5" width="9" height="3"/><rect x="39" y="33" width="9" height="3"/><rect x="39" y="37.5" width="9" height="3"/></g><rect x="21" y="50" width="22" height="12" rx="2" fill="#fff"/><rect x="21" y="50" width="5" height="12" rx="2" fill="#606266"/><text x="26" y="60" font-size="11" font-weight="bold" fill="#606266" font-family="Liberation Sans, sans-serif" textLength="16.5" lengthAdjust="spacingAndGlyphs">avi</text></g></svg></div>
<div class="cell" style="left:362px;top:380px"><svg viewBox="0 0 84 84"><g transform="translate(0,0)"><path d="M30 20 H53 L63 30 V64 a3 3 0 0 1 -3 3 H30 a3 3 0 0 1 -3 -3 V23 a3 3 0 0 1 3 -3 Z" fill="#606266"/><g fill="#fff"><rect x="32" y="27.5" width="15" height="2"/><rect x="32" y="32" width="15" height="2"/><rect x="32" y="37" width="20" height="2"/><rect x="32" y="41.5" width="25" height="2"/></g><rect x="21" y="50" width="22" height="12" rx="2" fill="#fff"/><rect x="21" y="50" width="5" height="12" rx="2" fill="#606266"/><text x="26" y="60" font-size="11" font-weight="bold" fill="#606266" font-family="Liberation Sans, sans-serif" textLength="16.5" lengthAdjust="spacingAndGlyphs">引文</text></g></svg></div>
<div class="cell" style="left:466px;top:380px"><svg viewBox="0 0 84 84"><g transform="translate(0,0)"><path d="M30 20 H53 L63 30 V64 a3 3 0 0 1 -3 3 H30 a3 3 0 0 1 -3 -3 V23 a3 3 0 0 1 3 -3 Z" fill="#606266"/><g fill="#fff"><rect x="32" y="27.5" width="15" height="2"/><rect x="32" y="32" width="15" height="2"/><rect x="32" y="37" width="20" height="2"/><rect x="32" y="41.5" width="25" height="2"/></g><rect x="21" y="50" width="22" height="12" rx="2" fill="#fff"/><rect x="21" y="50" width="5" height="12" rx="2" fill="#606266"/><text x="26" y="60" font-size="11" font-weight="bold" fill="#606266" font-family="Liberation Sans, sans-serif" textLength="16.5" lengthAdjust="spacingAndGlyphs">doc</text></g></svg></div>
<div class="cell" style="left:570px;top:380px"><svg viewBox="0 0 84 84"><g transform="translate(0,0)"><path d="M30 20 H53 L63 30 V64 a3 3 0 0 1 -3 3 H30 a3 3 0 0 1 -3 -3 V23 a3 3 0 0 1 3 -3 Z" fill="#606266"/><rect x="21" y="50" width="22" height="12" rx="2" fill="#fff"/><rect x="21" y="50" width="5" height="12" rx="2" fill="#606266"/><text x="26" y="60" font-size="11" font-weight="bold" fill="#606266" font-family="Liberation Sans, sans-serif" textLength="16.5" lengthAdjust="spacingAndGlyphs">附件</text></g></svg></div>
<div class="cell" style="left:674px;top:380px"><svg viewBox="0 0 84 84"><g transform="translate(0,0)"><path d="M30 20 H53 L63 30 V64 a3 3 0 0 1 -3 3 H30 a3 3 0 0 1 -3 -3 V23 a3 3 0 0 1 3 -3 Z" fill="#606266"/><path d="M42 26 C40 30 38 36 33 43 M42 26 C43 32 45 36 51 38 C47 37 40 38 35 41" fill="none" stroke="#fff" stroke-width="1.6" stroke-linecap="round"/><rect x="21" y="50" width="22" height="12" rx="2" fill="#fff"/><rect x="21" y="50" width="5" height="12" rx="2" fill="#606266"/><text x="26" y="60" font-size="11" font-weight="bold" fill="#606266" font-family="Liberation Sans, sans-serif" textLength="16.5" lengthAdjust="spacingAndGlyphs">pdf</text></g></svg></div>
<div class="cell" style="left:778px;top:380px"><svg viewBox="0 0 84 84"><g transform="translate(-1.7,0)"><path d="M30 20 H53 L63 30 V64 a3 3 0 0 1 -3 3 H30 a3 3 0 0 1 -3 -3 V23 a3 3 0 0 1 3 -3 Z" fill="#606266"/><rect x="21" y="50" width="22" height="12" rx="2" fill="#fff"/><rect x="21" y="50" width="5" height="12" rx="2" fill="#606266"/><text x="26" y="60" font-size="11" font-weight="bold" fill="#606266" font-family="Liberation Sans, sans-serif" textLength="16.5" lengthAdjust="spacingAndGlyphs">exe</text></g></svg></div>
<div class="cell" style="left:882px;top:380px"><svg viewBox="0 0 84 84"><g transform="translate(0,0)"><path d="M30 20 H53 L63 30 V64 a3 3 0 0 1 -3 3 H30 a3 3 0 0 1 -3 -3 V23 a3 3 0 0 1 3 -3 Z" fill="#606266"/><rect x="21" y="50" width="22" height="12" rx="2" fill="#fff"/><rect x="21" y="50" width="5" height="12" rx="2" fill="#606266"/><text x="26" y="60" font-size="11" font-weight="bold" fill="#606266" font-family="Liberation Sans, sans-serif" textLength="16.5" lengthAdjust="spacingAndGlyphs">eps</text></g></svg></div>
<div class="cell" style="left:986px;top:380px"><svg viewBox="0 0 84 84"><g transform="translate(0,0)"><path d="M30 20 H53 L63 30 V64 a3 3 0 0 1 -3 3 H30 a3 3 0 0 1 -3 -3 V23 a3 3 0 0 1 3 -3 Z" fill="#606266"/><path d="M39 28 L41 30 M42 26 H48 V43 H41 M42 32 H46 M42 36 H46" fill="none" stroke="#fff" stroke-width="1.3"/><rect x="21" y="50" width="22" height="12" rx="2" fill="#fff"/><rect x="21" y="50" width="5" height="12" rx="2" fill="#606266"/><text x="26" y="60" font-size="11" font-weight="bold" fill="#606266" font-family="Liberation Sans, sans-serif" textLength="16.5" lengthAdjust="spacingAndGlyphs">问题</text></g></svg></div>
<div class="cell" style="left:50px;top:494px"><svg viewBox="0 0 84 84"><g transform="translate(0,0)"><path d="M30 20 H53 L63 30 V64 a3 3 0 0 1 -3 3 H30 a3 3 0 0 1 -3 -3 V23 a3 3 0 0 1 3 -3 Z" fill="#606266"/><path d="M37 27 L40 29 L37 31 L40 33 L37 35 L40 37" fill="none" stroke="#fff" stroke-width="1.2"/><rect x="21" y="50" width="22" height="12" rx="2" fill="#fff"/><rect x="21" y="50" width="5" height="12" rx="2" fill="#606266"/><text x="26" y="60" font-size="11" font-weight="bold" fill="#606266" font-family="Liberation Sans, sans-serif" textLength="16.5" lengthAdjust="spacingAndGlyphs">zip</text></g></svg></div>
<div class="cell" style="left:154px;top:494px"><svg viewBox="0 0 84 84"><g transform="translate(0,0)"><path d="M30 20 H53 L63 30 V64 a3 3 0 0 1 -3 3 H30 a3 3 0 0 1 -3 -3 V23 a3 3 0 0 1 3 -3 Z" fill="#606266"/><rect x="21" y="50" width="22" height="12" rx="2" fill="#fff"/><rect x="21" y="50" width="5" height="12" rx="2" fill="#606266"/><text x="26" y="60" font-size="11" font-weight="bold" fill="#606266" font-family="Liberation Sans, sans-serif" textLength="16.5" lengthAdjust="spacingAndGlyphs">mp3</text></g></svg></div>
<div class="cell" style="left:258px;top:494px"><svg viewBox="0 0 84 84"><g transform="translate(0,0)"><path d="M30 20 H53 L63 30 V64 a3 3 0 0 1 -3 3 H30 a3 3 0 0 1 -3 -3 V23 a3 3 0 0 1 3 -3 Z" fill="#606266"/><rect x="21" y="50" width="22" height="12" rx="2" fill="#fff"/><rect x="21" y="50" width="5" height="12" rx="2" fill="#606266"/><text x="26" y="60" font-size="11" font-weight="bold" fill="#606266" font-family="Liberation Sans, sans-serif" textLength="16.5" lengthAdjust="spacingAndGlyphs">swf</text></g></svg></div>
<div class="cell" style="left:362px;top:494px"><svg viewBox="0 0 84 84"><g transform="translate(0,0)"><path d="M30 20 H53 L63 30 V64 a3 3 0 0 1 -3 3 H30 a3 3 0 0 1 -3 -3 V23 a3 3 0 0 1 3 -3 Z" fill="#606266"/><path d="M32 44 C33 38 35 36 37 38 C39 33 41 32 43 35 C46 31 50 34 52 44 Z" fill="#fff"/><rect x="21" y="50" width="22" height="12" rx="2" fill="#fff"/><rect x="21" y="50" width="5" height="12" rx="2" fill="#606266"/><text x="26" y="60" font-size="11" font-weight="bold" fill="#606266" font-family="Liberation Sans, sans-serif" textLength="16.5" lengthAdjust="spacingAndGlyphs">图片</text></g></svg></div>
<div class="cell" style="left:466px;top:494px"><svg viewBox="0 0 84 84"><g transform="translate(0,0)"><path d="M30 20 H53 L63 30 V64 a3 3 0 0 1 -3 3 H30 a3 3 0 0 1 -3 -3 V23 a3 3 0 0 1 3 -3 Z" fill="#606266"/><path d="M35 27 H48 V40 H35 Z M38 27 V33 H42" fill="none" stroke="#fff" stroke-width="1.2"/><rect x="41" y="34" width="5" height="8" rx="2" fill="none" stroke="#fff" stroke-width="1.2"/><rect x="21" y="50" width="22" height="12" rx="2" fill="#fff"/><rect x="21" y="50" width="5" height="12" rx="2" fill="#606266"/><text x="26" y="60" font-size="11" font-weight="bold" fill="#606266" font-family="Liberation Sans, sans-serif" textLength="16.5" lengthAdjust="spacingAndGlyphs">实训</text></g></svg></div>
<div class="cell" style="left:570px;top:494px"><svg viewBox="0 0 84 84"><path d="M40 34.5 L45.5 29 C49 25.5 54 25.5 57 28.5 C60 31.5 60 36.5 56.5 40 L50 46.5 M44 49.5 L38.5 55 C35 58.5 30 58.5 27 55.5 C24 52.5 24 47.5 27.5 44 L33.5 38 M31.5 25.5 L33 30 M23 33.5 L28.5 35.5 M51 57 L52.5 62 M56 53 L61 54.5" fill="none" stroke="#606266" stroke-width="4" stroke-linecap="round" stroke-linejoin="round"/></svg></div>
<div class="cell" style="left:674px;top:494px"><svg viewBox="0 0 84 84"><path d="M14 16 H70 V72 H14 Z" fill="#606266"/></svg></div>
<div class="cell" style="left:778px;top:494px"><svg viewBox="0 0 84 84"><path d="M14 16 H70 V72 H14 Z" fill="#606266"/></svg></div>
<div class="cell" style="left:882px;top:494px"><svg viewBox="0 0 84 84"><path d="M26 23.5 H50 a3 3 0 0 1 3 3 V61 a3 3 0 0 1 -3 3 H26 a3 3 0 0 1 -3 -3 V26.5 a3 3 0 0 1 3 -3 Z M32 33.5 H43.5 M32 44 H43.5 M32 54.5 H43.5" fill="none" stroke="#606266" stroke-width="4" stroke-linecap="round" stroke-linejoin="round"/><path d="M60.5 24 V62" fill="none" stroke="#606266" stroke-width="3.2" stroke-linecap="round" stroke-linejoin="round"/><path d="M58.5 62 L62.5 62 L60.5 66 Z" fill="#606266"/></svg></div>
<div class="cell" style="left:986px;top:494px"><svg viewBox="0 0 84 84"><path d="M24.5 51.5 H22 a2 2 0 0 1 -2 -2 V25 a2 2 0 0 1 2 -2 H58 a2 2 0 0 1 2 2 V30 M24 60.5 H28" fill="none" stroke="#606266" stroke-width="4" stroke-linecap="round" stroke-linejoin="round"/><path d="M62.1 53.4 L56.2 56.7 L52.9 62.6 L47.0 59.2 L40.3 59.2 L40.3 52.5 L36.9 46.6 L42.8 43.3 L46.1 37.4 L52.0 40.8 L58.7 40.8 L58.7 47.5 Z" fill="none" stroke="#606266" stroke-width="4" stroke-linecap="round" stroke-linejoin="round"/><circle cx="49.5" cy="50" r="3.6" fill="none" stroke="#606266" stroke-width="3.4"/></svg></div>
<div class="cell" style="left:50px;top:608px"><svg viewBox="0 0 84 84"><path d="M26.5 19 H57.5 a8.5 8.5 0 0 1 8.5 8.5 V61 a8.5 8.5 0 0 1 -8.5 8.5 H26.5 a8.5 8.5 0 0 1 -8.5 -8.5 V27.5 a8.5 8.5 0 0 1 8.5 -8.5 Z" fill="none" stroke="#606266" stroke-width="5" stroke-linecap="round" stroke-linejoin="round"/><path d="M32 31 L42 42 L52 31 M30.5 41.5 H53.5 M28 50.5 H56 M42 42 V57.5" fill="none" stroke="#606266" stroke-width="4.6" stroke-linecap="round" stroke-linejoin="round"/></svg></div>
<div class="cell" style="left:154px;top:608px"><svg viewBox="0 0 84 84"><path d="M18.5 26 L40.5 41.5 L64.5 28.5 M40.5 41.5 V65.5 M25.5 24 Q43 15.5 64.5 28.5 M18.5 26 Q19.5 47 33.5 57.5 M40.5 65.5 Q58 58 64.5 40.5" fill="none" stroke="#606266" stroke-width="4.8" stroke-linecap="round" stroke-linejoin="round"/></svg></div>
<div class="cell" style="left:258px;top:608px"><svg viewBox="0 0 84 84"><circle cx="42" cy="44" r="22.2" fill="none" stroke="#606266" stroke-width="5"/><path d="M27 58 L28.5 44 L31.5 51 C34 44 37 36 40.5 31 C45 36 49 43 51.5 50 L53.5 37.5 C57 41 59.5 45 60.5 48.5 C59 53 55 58 50.5 60 C48.5 54 46 48 43 44.5 C40 49 35 54 31 58 Z" fill="#606266"/></svg></div>
<div class="cell" style="left:362px;top:608px"><svg viewBox="0 0 84 84"><path fill-rule="evenodd" fill="#606266" d="M41.8 19.7 L63.1 31.7 L63.1 38.1 L45.2 48 L45.2 41.5 L56.3 35.1 L41.8 26.6 L26.9 35.1 L26.9 52.6 L41.8 61.6 L63.1 49.6 L63.1 56.5 L41.8 68 L20.5 56.5 L20.5 31.7 Z M51.2 47.1 L63.1 40.7 L63.1 47.9 L51.2 53.9 Z"/></svg></div>
<div class="cell" style="left:466px;top:608px"><svg viewBox="0 0 84 84"><path d="M42 21 L65.5 38.5 L56.5 66.5 H27.5 L18.5 38.5 Z M42 30.5 L56.5 41 L51 58 H33 L27.5 41 Z M42 21 V45 M65.5 38.5 L42 45 M56.5 66.5 L42 45 M27.5 66.5 L42 45 M18.5 38.5 L42 45" fill="none" stroke="#606266" stroke-width="3.8" stroke-linecap="round" stroke-linejoin="round"/></svg></div>
<div class="cell" style="left:570px;top:608px"><svg viewBox="0 0 84 84"><path d="M57.9 44.9 L63 39.8 C67.8 35 67.8 26.5 63 21.8 C58.2 17 50 17 45.2 21.8 L37.2 29.8 C32.8 34.2 32.5 41.5 38.2 49.2 M26.3 43.2 L21 48.5 C16.2 53.3 16.2 61.5 21 66.3 C25.8 71.1 34 71.1 38.8 66.3 L46.8 58.3 C51.2 53.9 51.5 46 45.9 38.5" fill="none" stroke="#606266" stroke-width="4.8" stroke-linecap="round" stroke-linejoin="round"/></svg></div>
<div class="cell" style="left:674px;top:608px"><svg viewBox="0 0 84 84"><path d="M22.2 62.5 A23.5 23.5 0 1 1 60.8 62.5 M18.2 49.0 L22.5 49.0 M25.0 32.5 L28.1 35.6 M41.5 25.7 L41.5 30.0 M58.0 32.5 L54.9 35.6 M64.8 49.0 L60.5 49.0 M40.6 50.5 L48.7 42.8" fill="none" stroke="#606266" stroke-width="4.6" stroke-linecap="round" stroke-linejoin="round"/><circle cx="40.6" cy="50.5" r="3.6" fill="#606266"/></svg></div>
<div class="cell" style="left:778px;top:608px"><svg viewBox="0 0 84 84"><path d="M16.5 62 V24 a3.5 3.5 0 0 1 3.5 -3.5 H46 L52.5 31 H64 a3.5 3.5 0 0 1 3.5 3.5 V62 a3.5 3.5 0 0 1 -3.5 3.5 H20 a3.5 3.5 0 0 1 -3.5 -3.5 Z M16.5 32.5 H52 M36.5 43.5 H48 M36.5 54.5 H57" fill="none" stroke="#606266" stroke-width="4.8" stroke-linecap="round" stroke-linejoin="round"/><circle cx="27.3" cy="43.6" r="2.8" fill="#606266"/><circle cx="27.3" cy="54.6" r="2.8" fill="#606266"/></svg></div>
<div class="cell" style="left:882px;top:608px"><svg viewBox="0 0 84 84"><path d="M22 26 H62 a3 3 0 0 1 3 3 V66 a3 3 0 0 1 -3 3 H22 a3 3 0 0 1 -3 -3 V29 a3 3 0 0 1 3 -3 Z M19 38.5 H65 M33.3 19 V31 M50.4 19 V31 M39.5 49.7 H54.5 M39.5 57.7 H54.5" fill="none" stroke="#606266" stroke-width="4.8" stroke-linecap="round" stroke-linejoin="round"/><circle cx="30.2" cy="49.7" r="2.8" fill="#606266"/><circle cx="30.2" cy="57.7" r="2.8" fill="#606266"/></svg></div>
<div class="cell" style="left:986px;top:608px"><svg viewBox="0 0 84 84"><path d="M17.5 60 V23 a3 3 0 0 1 3 -3 H54.5 M34 27.5 H64.5 a3 3 0 0 1 3 3 V66 a3 3 0 0 1 -3 3 H34 a3 3 0 0 1 -3 -3 V30.5 a3 3 0 0 1 3 -3 Z M47.5 39.6 H59 M47.5 47.6 H59 M47.5 56 H59" fill="none" stroke="#606266" stroke-width="4.8" stroke-linecap="round" stroke-linejoin="round"/><circle cx="40.3" cy="39.6" r="2.6" fill="#606266"/><circle cx="40.3" cy="47.6" r="2.6" fill="#606266"/><circle cx="40.3" cy="56" r="2.6" fill="#606266"/></svg></div>
<div class="cell" style="left:50px;top:722px"><svg viewBox="0 0 84 84"><path d="M25 18.5 H59.5 a3 3 0 0 1 3 3 V66.5 a3 3 0 0 1 -3 3 H25 a3 3 0 0 1 -3 -3 V21.5 a3 3 0 0 1 3 -3 Z M31.5 31.5 L37.5 36.5 L46 28.5 M41.5 46.5 H50.5 M41.5 57.5 H50.5" fill="none" stroke="#606266" stroke-width="4.8" stroke-linecap="round" stroke-linejoin="round"/><circle cx="33.4" cy="46.6" r="2.7" fill="#606266"/><circle cx="33.4" cy="57.7" r="2.7" fill="#606266"/></svg></div>
<div class="cell" style="left:154px;top:722px"><svg viewBox="0 0 84 84"><path d="M31.5 22 H25 a3 3 0 0 0 -3 3 V66.5 a3 3 0 0 0 3 3 H59 a3 3 0 0 0 3 -3 V25 a3 3 0 0 0 -3 -3 H52.5 M35.5 18.5 H48.5 a3 3 0 0 1 3 3 V26 a3 3 0 0 1 -3 3 H35.5 a3 3 0 0 1 -3 -3 V21.5 a3 3 0 0 1 3 -3 Z M42 40.5 H51 M42 49 H51 M42 57.5 H51" fill="none" stroke="#606266" stroke-width="4.8" stroke-linecap="round" stroke-linejoin="round"/><circle cx="33.4" cy="40.5" r="2.7" fill="#606266"/><circle cx="33.4" cy="49.2" r="2.7" fill="#606266"/><circle cx="33.4" cy="57.7" r="2.7" fill="#606266"/></svg></div>
<div class="cell" style="left:258px;top:722px"><svg viewBox="0 0 84 84"><path d="M35.5 40 a10 10 0 1 1 16.5 -7 M21.5 61.5 C22.5 53.5 28 47 35 44.5 M16 52.5 C17 47 20.5 43 25 41 M26.5 37.5 C23 33 25 27 29 24.5 M56 24 C58 25.5 59 27.5 59 30" fill="none" stroke="#606266" stroke-width="4.6" stroke-linecap="round" stroke-linejoin="round"/><circle cx="55.5" cy="52.6" r="11.5" fill="none" stroke="#606266" stroke-width="4.6"/><path d="M54 46 V53 L58 57" fill="none" stroke="#606266" stroke-width="4" stroke-linecap="round" stroke-linejoin="round"/></svg></div>
<div class="cell" style="left:362px;top:722px"><svg viewBox="0 0 84 84"><path d="M28.5 22 H22 a3 3 0 0 0 -3 3 V66.5 a3 3 0 0 0 3 3 H35 M49.5 22 H56 a3 3 0 0 1 3 3 V35 M32.5 18.5 H45.5 a3 3 0 0 1 3 3 V26 a3 3 0 0 1 -3 3 H32.5 a3 3 0 0 1 -3 -3 V21.5 a3 3 0 0 1 3 -3 Z M38 40 H44" fill="none" stroke="#606266" stroke-width="4.8" stroke-linecap="round" stroke-linejoin="round"/><circle cx="30.2" cy="40.5" r="2.7" fill="#606266"/><circle cx="30.2" cy="49.2" r="2.7" fill="#606266"/><circle cx="30.2" cy="57.7" r="2.7" fill="#606266"/><circle cx="52.4" cy="57.5" r="12" fill="#fff" stroke="#606266" stroke-width="4.6"/><path d="M51 51 V58 L55 62" fill="none" stroke="#606266" stroke-width="4" stroke-linecap="round" stroke-linejoin="round"/></svg></div>
<div class="cell" style="left:466px;top:722px"><svg viewBox="0 0 84 84"><path d="M17.5 32 V21 a3 3 0 0 1 3 -3 H32 M52 18 H64 a3 3 0 0 1 3 3 V32 M67 52 V66.5 a3 3 0 0 1 -3 3 H52 M32 69.5 H20.5 a3 3 0 0 1 -3 -3 V52 M29.5 30.5 H55 a2 2 0 0 1 2 2 V46.5 a2 2 0 0 1 -2 2 H29.5 a2 2 0 0 1 -2 -2 V32.5 a2 2 0 0 1 2 -2 Z M42 48.5 V56 M33.5 57.5 H50.5" fill="none" stroke="#606266" stroke-width="4.8" stroke-linecap="round" stroke-linejoin="round"/></svg></div>
<div class="cell" style="left:570px;top:722px"><svg viewBox="0 0 84 84"><path d="M15.5 24.4 H69.5 M15.5 43.9 H69.5 M15.5 63.3 H69.5" fill="none" stroke="#606266" stroke-width="4.4" stroke-linecap="round" stroke-linejoin="round"/><g fill="#fff" stroke="#606266" stroke-width="4.4"><circle cx="28" cy="24.4" r="6"/><circle cx="55.6" cy="43.9" r="6"/><circle cx="28" cy="63.3" r="6"/></g></svg></div>
<div class="cell" style="left:674px;top:722px"><svg viewBox="0 0 84 84"><circle cx="42" cy="44" r="25" fill="none" stroke="#606266" stroke-width="5"/><path d="M41.4 32.5 V43.5 L49.5 51.5" fill="none" stroke="#606266" stroke-width="5" stroke-linecap="round" stroke-linejoin="round"/></svg></div>
<div class="cell" style="left:778px;top:722px"><svg viewBox="0 0 84 84"><circle cx="41.8" cy="35.5" r="11" fill="none" stroke="#606266" stroke-width="4.6"/><path d="M22.5 62.5 C24 53 32 46.5 41.8 46.5 C51.5 46.5 59.5 53 61.2 62.5 M16.5 52.5 C18 46 22 42 27 40 M26.5 27 C24.5 29 23.5 32 24 35 M57 27 C59 29 60 32 59.5 35 M67 52.5 C65.5 46 61.5 42 56.5 40" fill="none" stroke="#606266" stroke-width="4.6" stroke-linecap="round" stroke-linejoin="round"/></svg></div>
<div class="cell" style="left:882px;top:722px"><svg viewBox="0 0 84 84"><circle cx="41.9" cy="44" r="25.3" fill="none" stroke="#606266" stroke-width="5"/><path d="M36.5 33 L53 44 L36.5 55 Z" fill="#606266"/></svg></div>
<div class="cell" style="left:986px;top:722px"><svg viewBox="0 0 84 84"><path d="M23.5 18.5 H50.5 L61 29 V66.5 a2.5 2.5 0 0 1 -2.5 2.5 H23.5 a2.5 2.5 0 0 1 -2.5 -2.5 V21 a2.5 2.5 0 0 1 2.5 -2.5 Z M50.5 18.5 V29 H61 M32.2 35 H40.3 M32.2 46.6 H52.4 M32.2 57.7 H52.4" fill="none" stroke="#606266" stroke-width="4.8" stroke-linecap="round" stroke-linejoin="round"/></svg></div>
<div class="cell" style="left:50px;top:836px"><svg viewBox="0 0 84 84"><path d="M42 19.5 L49.5 34.5 L66.5 37 L54 49 L57 66 L42 58 L27 66 L30 49 L17.5 37 L34.5 34.5 Z" fill="none" stroke="#606266" stroke-width="4.8" stroke-linecap="round" stroke-linejoin="round"/></svg></div>
<div class="cell" style="left:154px;top:836px"><svg viewBox="0 0 84 84"><path d="M27.5 18.5 H20.5 a3 3 0 0 0 -3 3 V30 M56.5 18.5 H63.5 a3 3 0 0 1 3 3 V30 M66.5 57 V66.5 a3 3 0 0 1 -3 3 H56.5 M27.5 69.5 H20.5 a3 3 0 0 1 -3 -3 V57 M24 43.6 H60" fill="none" stroke="#606266" stroke-width="4.8" stroke-linecap="round" stroke-linejoin="round"/></svg></div>
<div class="cell" style="left:258px;top:836px"><svg viewBox="0 0 84 84"><path d="M19.5 23.5 H64.5 a2.5 2.5 0 0 1 2.5 2.5 V61.5 a2.5 2.5 0 0 1 -2.5 2.5 H19.5 a2.5 2.5 0 0 1 -2.5 -2.5 V26 a2.5 2.5 0 0 1 2.5 -2.5 Z M17.5 55 L28.3 46 L34.3 53 L49.5 38.5 L66.5 55.5" fill="none" stroke="#606266" stroke-width="4.8" stroke-linecap="round" stroke-linejoin="round"/><circle cx="28.7" cy="36.1" r="3.6" fill="#606266"/></svg></div>
<div class="cell" style="left:362px;top:836px"><svg viewBox="0 0 84 84"><path d="M22 30 H20 a3.5 3.5 0 0 0 -3.5 3.5 V66 a3.5 3.5 0 0 0 3.5 3.5 H64 a3.5 3.5 0 0 0 3.5 -3.5 V33.5 a3.5 3.5 0 0 0 -3.5 -3.5 H62 M32 47 V22.5 a4 4 0 0 1 4 -4 H49 a4 4 0 0 1 4 4 V47 M26.5 48 H58 M36.5 33 L40.5 36.5 L47 30" fill="none" stroke="#606266" stroke-width="4.8" stroke-linecap="round" stroke-linejoin="round"/></svg></div>
<div class="cell" style="left:466px;top:836px"><svg viewBox="0 0 84 84"><path d="M19 20.5 H65 a2.5 2.5 0 0 1 2.5 2.5 V53.5 a2.5 2.5 0 0 1 -2.5 2.5 H43 L27.5 65 V56 H19 a2.5 2.5 0 0 1 -2.5 -2.5 V23 a2.5 2.5 0 0 1 2.5 -2.5 Z" fill="none" stroke="#606266" stroke-width="4.8" stroke-linecap="round" stroke-linejoin="round"/><circle cx="29.2" cy="38.9" r="3.4" fill="#606266"/><circle cx="41.9" cy="38.9" r="3.4" fill="#606266"/><circle cx="54.4" cy="38.9" r="3.4" fill="#606266"/></svg></div>
<div class="cell" style="left:570px;top:836px"><svg viewBox="0 0 84 84"><circle cx="40.1" cy="32.5" r="10.5" fill="none" stroke="#5c9ef6" stroke-width="4.4"/><path d="M39.5 62.5 H24 C22 62.5 21.3 61 21.5 59.5 C22.5 50.5 30 43 40.1 43 M47.5 54.7 L53.6 59.7 L62.7 48.6" fill="none" stroke="#5c9ef6" stroke-width="4.4" stroke-linecap="round" stroke-linejoin="round"/></svg></div>
<div class="cell" style="left:674px;top:836px"><svg viewBox="0 0 84 84"><path d="M22.5 39.5 C20 38.5 20.5 35 23 34 L58 21.5 C61 20.5 63.5 23 62.5 26 L51.5 63 C50.5 66 47 66 45.5 63.5 L37 48 Z M42.4 43.6 L51.5 34.1" fill="none" stroke="#606266" stroke-width="4.6" stroke-linecap="round" stroke-linejoin="round"/></svg></div>
<div class="cell" style="left:778px;top:836px"><svg viewBox="0 0 84 84"><path d="M42 21.5 L25 27 a3 3 0 0 0 -2.5 3 V44 C22.5 54.5 30 61.5 42 66 C54 61.5 61.5 54.5 61.5 44 V30 a3 3 0 0 0 -2.5 -3 Z M42 45 V57 M42 51.5 H46" fill="none" stroke="#606266" stroke-width="4.2" stroke-linecap="round" stroke-linejoin="round"/><circle cx="42.4" cy="38.5" r="6.5" fill="none" stroke="#606266" stroke-width="4.2"/></svg></div>
<div class="cell" style="left:882px;top:836px"><svg viewBox="0 0 84 84"><path d="M42 20.5 L48.5 26 L57 25.5 L58 34 L64 42 L58 50 L57 58.5 L48.5 58 L42 64.5 L35.5 58 L27 58.5 L26 50 L20 42 L26 34 L27 25.5 L35.5 26 Z M34.3 43.6 L40.3 49.7 L49.4 38.5" fill="none" stroke="#606266" stroke-width="4.4" stroke-linecap="round" stroke-linejoin="round"/></svg></div>
<div class="cell" style="left:986px;top:836px"><svg viewBox="0 0 84 84"><path d="M34.5 20.5 H49.5 V35.5 H34.5 Z M42 35.5 V43.6 M27.5 51.5 V43.6 H56.5 V51.5 M20.5 51.5 H36 V67.5 H20.5 Z M47.5 51.5 H63 V67.5 H47.5 Z" fill="none" stroke="#606266" stroke-width="4.2" stroke-linecap="round" stroke-linejoin="round"/></svg></div>
<div class="cell" style="left:50px;top:950px"><svg viewBox="0 0 84 84"><circle cx="42.1" cy="43.7" r="22" fill="none" stroke="#606266" stroke-width="4.6"/><path d="M42.1 29 V45.5 H53" fill="none" stroke="#606266" stroke-width="4.6" stroke-linecap="round" stroke-linejoin="round"/></svg></div>
<div class="cell" style="left:154px;top:950px"><svg viewBox="0 0 84 84"><path d="M30.3 61.5 A20 20 0 1 1 52.5 61.5 M34.5 52.5 A11 11 0 0 1 34.5 34 M48.5 34 A11 11 0 0 1 48.5 52.5 M41.4 48 V64" fill="none" stroke="#606266" stroke-width="4.4" stroke-linecap="round" stroke-linejoin="round"/><circle cx="41.4" cy="41.3" r="2.6" fill="#606266"/></svg></div>
<div class="cell" style="left:258px;top:950px"><svg viewBox="0 0 84 84"><path d="M25 21.8 H59.5 a2.5 2.5 0 0 1 2.5 2.5 V62.5 C62 64.5 60.5 65.8 58.5 65 L42.4 58.5 L26.2 65 C24.2 65.8 22.5 64.5 22.5 62.5 V24.3 a2.5 2.5 0 0 1 2.5 -2.5 Z M32.5 40.5 H52.5 M42.4 30.5 V50.5" fill="none" stroke="#606266" stroke-width="4.6" stroke-linecap="round" stroke-linejoin="round"/></svg></div>
<div class="cell" style="left:362px;top:950px"><svg viewBox="0 0 84 84"><circle cx="41.9" cy="43.9" r="22" fill="none" stroke="#606266" stroke-width="4.6"/><path d="M26.5 30.5 L57 58.5" fill="none" stroke="#606266" stroke-width="4.6" stroke-linecap="round" stroke-linejoin="round"/></svg></div>
<div class="cell" style="left:466px;top:950px"><svg viewBox="0 0 84 84"><path d="M51.4 30.4 V27 a3 3 0 0 0 -3 -3 H25 a3 3 0 0 0 -3 3 V61 a3 3 0 0 0 3 3 H48.4 a3 3 0 0 0 3 -3 V57.7 M38.5 43.9 H62.5 M55.5 36 L62.5 43.9 L55.5 51.5" fill="none" stroke="#606266" stroke-width="4.4" stroke-linecap="round" stroke-linejoin="round"/></svg></div>
<div class="cell" style="left:570px;top:950px"><svg viewBox="0 0 84 84"><path d="M60 58 A20.5 20.5 0 1 0 54 63.5 L59.5 65 C60.5 65.2 61 64.5 60.6 63.5 Z M31.4 39.1 H52.6 M31.4 50 H46.5" fill="none" stroke="#606266" stroke-width="4.4" stroke-linecap="round" stroke-linejoin="round"/></svg></div>
<div class="cell" style="left:674px;top:950px"><svg viewBox="0 0 84 84"><path d="M19.2 23.3 L41.8 30.4 L64.6 23.3 M19.2 32.4 L41.8 39.9 L64.6 32.4 V58.7 L41.8 64.7 L19.2 58.7 Z M41.8 45.5 V56.6" fill="none" stroke="#606266" stroke-width="4.4" stroke-linecap="round" stroke-linejoin="round"/></svg></div>
<div class="cell" style="left:778px;top:950px"><svg viewBox="0 0 84 84"><circle cx="40" cy="41.9" r="18" fill="none" stroke="#606266" stroke-width="4.4"/><path d="M53.5 55.5 L62 64 M30.5 40.5 C31 46 35 50.5 40.5 51" fill="none" stroke="#606266" stroke-width="4.4" stroke-linecap="round" stroke-linejoin="round"/></svg></div>
<div class="cell" style="left:882px;top:950px"><svg viewBox="0 0 84 84"><path d="M28.5 56.5 A20.5 20.5 0 1 1 35 61 L23.5 65.5 C22 66 21.3 65 21.7 64 Z" fill="none" stroke="#606266" stroke-width="4.4" stroke-linecap="round" stroke-linejoin="round"/><circle cx="42" cy="42.5" r="10.5" fill="none" stroke="#606266" stroke-width="4.4"/><circle cx="42" cy="42.5" r="4.4" fill="#606266"/></svg></div>
<div class="cell" style="left:986px;top:950px"><svg viewBox="0 0 84 84"><path d="M41.8 64.1 A20.2 20.2 0 1 1 58.5 56 M41.8 64.1 H61.5 M37 35.5 L50.5 43.9 L37 52 Z" fill="none" stroke="#606266" stroke-width="4.4" stroke-linecap="round" stroke-linejoin="round"/></svg></div>
</div>

<svg class="a" style="left:2036px;top:1446px" width="26" height="18" viewBox="0 0 26 18" fill="none" stroke="#52a0f7" stroke-width="1.8"><path d="M1.5 9 C5 3.5 9 1.5 13 1.5 C17 1.5 21 3.5 24.5 9 C21 14.5 17 16.5 13 16.5 C9 16.5 5 14.5 1.5 9 Z"/><circle cx="13" cy="9" r="4.5"/></svg>
<div class="t" style="left:2077px;top:1443px;font-size:25px;color:#52a0f7">查看Api</div>
<div class="a" style="left:2481px;top:959px;width:72px;height:77px;border:5px solid #e8402a;border-radius:10px"></div>
<svg class="a" style="left:2000px;top:900px" width="380" height="100" viewBox="2000 900 380 100"><path d="M2013.6 936.2 L2069 911.8 L2061 928.9 L2352 979 A5 5 0 0 1 2352 989 L2057 956 L2060 974.4 Z" fill="#e8402a"/></svg>
<div class="a" style="left:2842px;top:1264px;width:110px;height:92px;border-radius:46px 0 0 46px;background:#e9edf5;box-shadow:0 2px 8px rgba(90,110,200,.25)"></div>
<div class="a" style="left:2896px;top:1264px;width:42px;height:92px;background:#eff3fc"></div>
<svg class="a" style="left:2858px;top:1279px" width="64" height="64" viewBox="0 0 64 64"><defs><linearGradient id="aig" x1="0" y1="0" x2="1" y2="1"><stop offset="0" stop-color="#b48cf0"/><stop offset=".5" stop-color="#7a6ef5"/><stop offset="1" stop-color="#4aa8e8"/></linearGradient></defs><circle cx="32.5" cy="32" r="28.5" fill="#eeeefa" stroke="url(#aig)" stroke-width="4"/><path d="M14.5 41 L25.5 22 H34 L37.5 41 H30 L28.5 33 L24.5 41 Z M24.5 36 H29" fill="#4f62e0"/><circle cx="42.5" cy="22.5" r="3.3" fill="#4f62e0"/><rect x="39.5" y="28" width="6" height="13" rx="1.5" fill="#4f62e0"/></svg>
</body></html>
